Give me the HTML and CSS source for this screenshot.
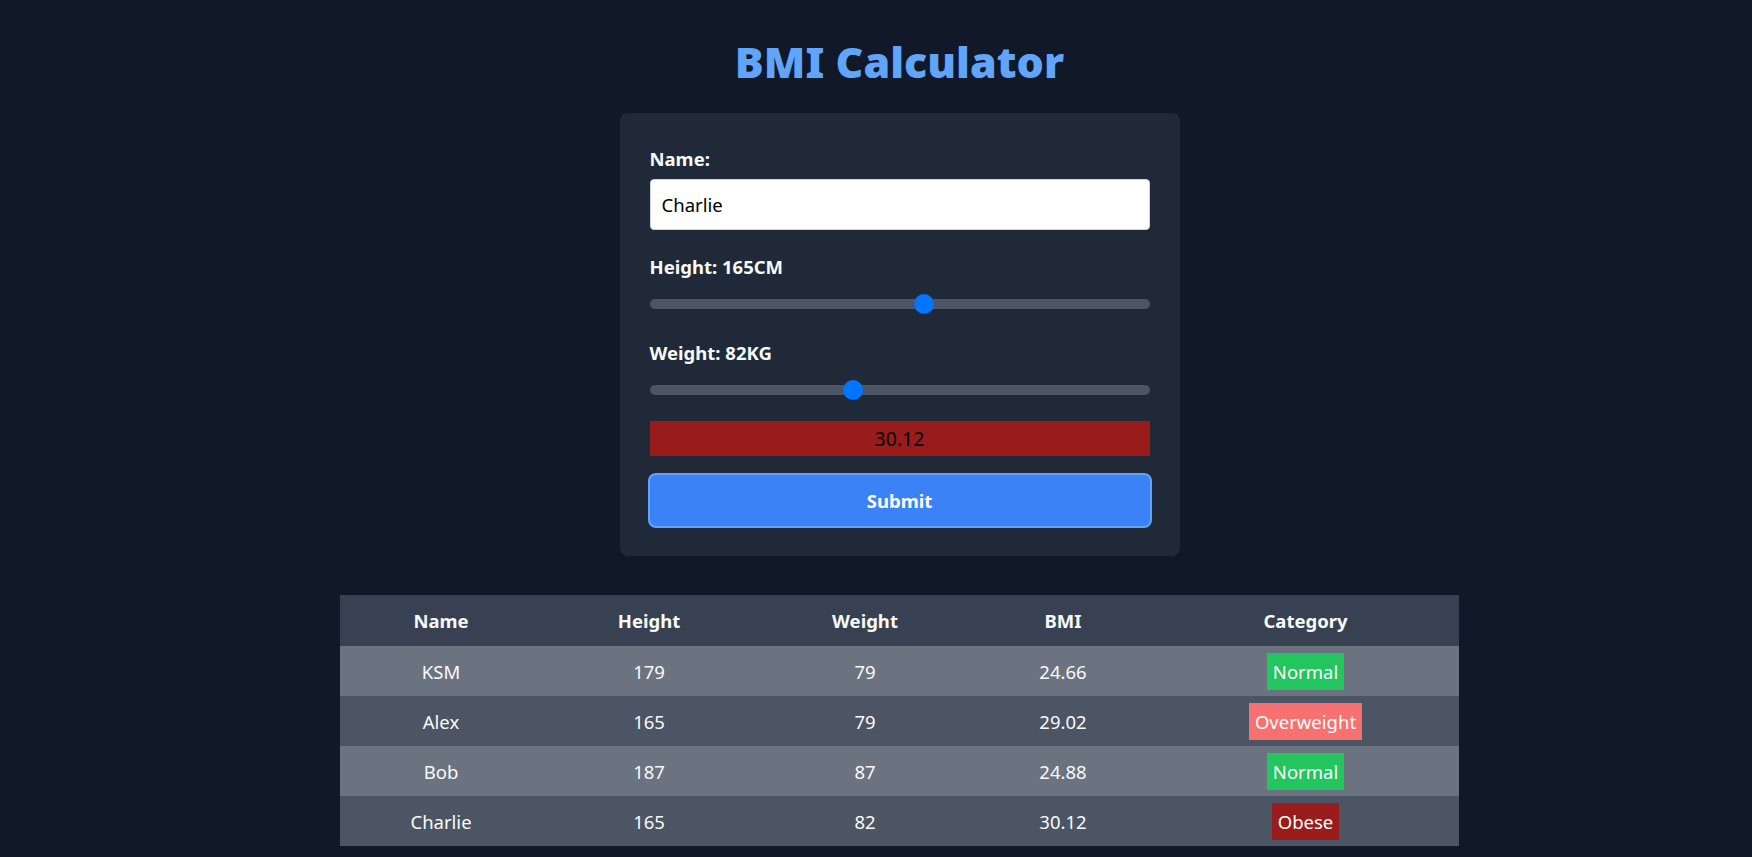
FILE: index.html
```html
<!DOCTYPE html>
<html lang="en">
<head>
<meta charset="utf-8">
<title>BMI Calculator</title>
<link rel="stylesheet" href="styles.css">
</head>
<body>
<main class="app">
  <h1 class="title">BMI Calculator</h1>
  <form class="card">
    <div class="field">
      <label class="label" for="name">Name:</label>
      <input class="text-input" id="name" type="text" value="Charlie">
    </div>
    <div class="field field-height">
      <label class="label" for="height">Height: 165CM</label>
      <input class="range" id="height" type="range" min="0" max="300" value="165">
    </div>
    <div class="field field-weight">
      <label class="label" for="weight">Weight: 82KG</label>
      <input class="range" id="weight" type="range" min="2" max="200" value="82">
    </div>
    <div class="result obese">30.12</div>
    <button class="submit" type="button">Submit</button>
  </form>
  <table class="records">
    <colgroup>
      <col class="c-name"><col class="c-height"><col class="c-weight"><col class="c-bmi"><col class="c-cat">
    </colgroup>
    <thead>
      <tr><th>Name</th><th>Height</th><th>Weight</th><th>BMI</th><th>Category</th></tr>
    </thead>
    <tbody>
      <tr><td>KSM</td><td>179</td><td>79</td><td>24.66</td><td><span class="badge normal">Normal</span></td></tr>
      <tr><td>Alex</td><td>165</td><td>79</td><td>29.02</td><td><span class="badge overweight">Overweight</span></td></tr>
      <tr><td>Bob</td><td>187</td><td>87</td><td>24.88</td><td><span class="badge normal">Normal</span></td></tr>
      <tr><td>Charlie</td><td>165</td><td>82</td><td>30.12</td><td><span class="badge obese">Obese</span></td></tr>
    </tbody>
  </table>
</main>
</body>
</html>
```

FILE: styles.css
```css
* { box-sizing: border-box; }

html, body {
  margin: 0;
  background: #111827;
}

body {
  font-family: "Noto Sans", "Open Sans", sans-serif;
  font-size: 18.5px;
  line-height: 29px;
  color: #f9fafb;
}

.app {
  display: flex;
  flex-direction: column;
  align-items: center;
  padding-left: 47px;
}

.title {
  margin: 35px 0 25px;
  font-size: 43px;
  line-height: 53px;
  font-weight: 900;
  color: #60a5fa;
}

.card {
  width: 560px;
  background: #1f2937;
  border-radius: 8px;
  padding: 31px 30px 30px;
  margin: 0 0 39px;
}

.field { margin-bottom: 22px; }
.field-height { margin-bottom: 24px; }
.field-weight { margin-bottom: 21px; }

.label {
  display: block;
  font-weight: 700;
  margin-bottom: 6px;
  padding-top: 1px;
  height: 29px;
  box-sizing: content-box;
  margin-top: -1px;
}

.text-input {
  display: block;
  width: 100%;
  height: 51px;
  padding: 10px 11px;
  border: 1px solid #d1d5db;
  border-radius: 4px;
  background: #ffffff;
  color: #000000;
  font: inherit;
  line-height: 29px;
  outline: none;
}

.range {
  -webkit-appearance: none;
  appearance: none;
  display: block;
  width: 100%;
  height: 20px;
  margin: 13px 0 0;
  padding: 0;
  background: transparent;
}
.range::-webkit-slider-runnable-track {
  height: 10px;
  background: #4b5563;
  border-radius: 5px;
}
.range::-webkit-slider-thumb {
  -webkit-appearance: none;
  appearance: none;
  width: 20px;
  height: 20px;
  margin-top: -5px;
  border: none;
  border-radius: 50%;
  background: #0075ff;
}

.result {
  height: 35px;
  line-height: 35px;
  text-align: center;
  font-size: 19.5px;
  color: #000000;
  margin-bottom: 19px;
}
.result.obese { background: #991b1b; }

.submit {
  display: block;
  width: 100%;
  height: 51px;
  border: none;
  border-radius: 6px;
  background: #3b82f6;
  box-shadow: 0 0 0 2px #60a5fa;
  color: #ffffff;
  font: inherit;
  font-weight: 700;
  cursor: pointer;
}

.records {
  width: 1119px;
  border-collapse: collapse;
  text-align: center;
}
.c-name { width: 202px; }
.c-height { width: 214px; }
.c-weight { width: 218px; }
.c-bmi { width: 178px; }
.c-cat { width: 307px; }

.records th {
  height: 51px;
  padding: 0;
  font-weight: 700;
  background: #374151;
}
.records td {
  height: 50px;
  padding: 0;
  vertical-align: middle;
}
.records tbody tr:nth-child(odd) { background: #6b7280; }
.records tbody tr:nth-child(even) { background: #4b5563; }

.badge {
  display: inline-block;
  padding: 4px 6px;
  line-height: 29px;
  color: #ffffff;
  vertical-align: middle;
}
.badge.normal { background: #22c55e; }
.badge.overweight { background: #f87171; }
.badge.obese { background: #991b1b; }
```
